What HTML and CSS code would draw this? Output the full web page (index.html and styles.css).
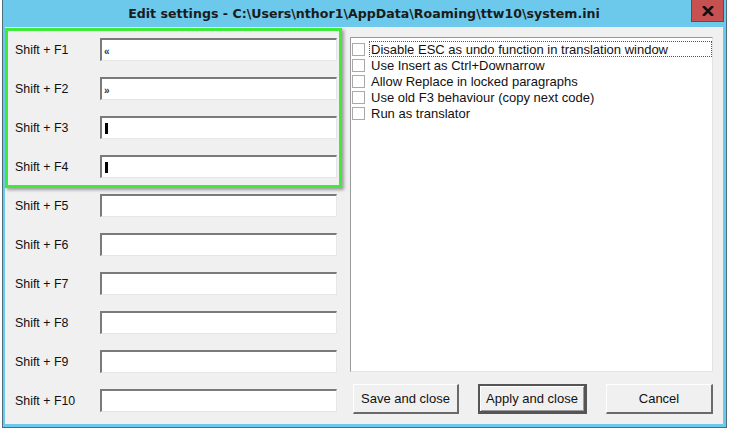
FILE: index.html
```html
<!DOCTYPE html>
<html>
<head>
<meta charset="utf-8">
<link rel="stylesheet" href="styles.css">
</head>
<body>
<div class="window">
  <div class="titlebar">
    <span></span>
    <span class="title">Edit settings - C:\Users\nthor1\AppData\Roaming\ttw10\system.ini</span>
    <span class="close"><svg width="12" height="10" viewBox="0 0 12 10"><path d="M2 1 L10 9 M10 1 L2 9" stroke="#111" stroke-width="2.6" stroke-linecap="square"/></svg></span>
  </div>
  <div class="client">
    <div class="left">
      <div class="group">
        <div class="row"><span class="label">Shift + F1</span><span class="field"><span class="small">«</span></span></div>
        <div class="row"><span class="label">Shift + F2</span><span class="field"><span class="small">»</span></span></div>
        <div class="row"><span class="label">Shift + F3</span><span class="field"><span class="bar"></span></span></div>
        <div class="row"><span class="label">Shift + F4</span><span class="field"><span class="bar"></span></span></div>
      </div>
      <div class="row"><span class="label">Shift + F5</span><span class="field"></span></div>
      <div class="row"><span class="label">Shift + F6</span><span class="field"></span></div>
      <div class="row"><span class="label">Shift + F7</span><span class="field"></span></div>
      <div class="row"><span class="label">Shift + F8</span><span class="field"></span></div>
      <div class="row"><span class="label">Shift + F9</span><span class="field"></span></div>
      <div class="row"><span class="label">Shift + F10</span><span class="field"></span></div>
    </div>
    <div class="right">
      <div class="list">
        <div class="item focus"><span class="check"></span><span class="text">Disable ESC as undo function in translation window</span></div>
        <div class="item"><span class="check"></span><span class="text">Use Insert as Ctrl+Downarrow</span></div>
        <div class="item"><span class="check"></span><span class="text">Allow Replace in locked paragraphs</span></div>
        <div class="item"><span class="check"></span><span class="text">Use old F3 behaviour (copy next code)</span></div>
        <div class="item"><span class="check"></span><span class="text">Run as translator</span></div>
      </div>
      <div class="buttons">
        <button class="btn save">Save and close</button>
        <button class="btn apply">Apply and close</button>
        <button class="btn cancel">Cancel</button>
      </div>
    </div>
  </div>
</div>
</body>
</html>
```
FILE: styles.css
```css
* { box-sizing: border-box; }
html, body { margin: 0; padding: 0; }
body {
  background: #ffffff;
  width: 731px;
  height: 432px;
  overflow: hidden;
  font-family: "Liberation Sans", Arial, sans-serif;
  font-size: 13px;
  color: #000;
}
.window {
  margin-left: 2px;
  width: 725px;
  height: 428px;
  border: 1px solid #4d6d7a;
  border-top: none;
  background: #6cc9ec;
  padding: 0 3px 3px 2px;
  display: flex;
  flex-direction: column;
}
.titlebar {
  height: 27px;
  display: grid;
  grid-template-columns: 1fr auto 1fr;
  align-items: start;
}
.title {
  font-family: "DejaVu Sans", sans-serif;
  font-weight: bold;
  font-size: 12.6px;
  color: #1b1b1b;
  line-height: 28px;
  white-space: nowrap;
}
.close {
  justify-self: end;
  width: 33px;
  height: 22px;
  margin-right: -1px;
  background: #c75050;
  border: 1px solid #8b3a3a;
  border-top: none;
  display: flex;
  align-items: center;
  justify-content: center;
}
.client {
  flex: 1;
  background: #f0f0f0;
  display: flex;
}
.left {
  width: 344px;
  padding: 11px 0 0 10px;
  display: flex;
  flex-direction: column;
  gap: 16px;
}
.group {
  position: relative;
  display: flex;
  flex-direction: column;
  gap: 16px;
}
.group::after {
  content: "";
  position: absolute;
  top: -10px;
  bottom: -10px;
  left: -10px;
  right: 7px;
  border: 3px solid #3fea3a;
  box-shadow: 2px 2px 3px rgba(0,0,0,0.35);
  pointer-events: none;
}
.row {
  display: flex;
  align-items: center;
  height: 23px;
}
.label {
  width: 85px;
  font-size: 12.4px;
  color: #111;
  padding-top: 1px;
}
.field {
  width: 237px;
  height: 23px;
  background: #fff;
  border-style: solid;
  border-width: 2px 1px 1px 2px;
  border-color: #7a7a7a #e6e6e6 #e6e6e6 #7a7a7a;
  display: flex;
  align-items: center;
  padding-left: 2px;
}
.small {
  font-size: 10px;
  font-weight: bold;
  color: #333;
  margin-top: 2px;
}
.bar {
  width: 3px;
  height: 11px;
  background: #000;
  margin-left: 1px;
  margin-top: 1px;
}
.right {
  flex: 1;
  padding: 10px 10px 0 1px;
  display: flex;
  flex-direction: column;
}
.list {
  height: 335px;
  background: #fff;
  border-top: 1px solid #9a9a9a;
  border-left: 1px solid #9a9a9a;
  border-right: 1px solid #e3e3e3;
  border-bottom: 1px solid #e3e3e3;
  padding: 3px 0 0 1px;
}
.item {
  display: flex;
  align-items: center;
  height: 16px;
}
.check {
  width: 13px;
  height: 13px;
  border: 1px solid #a9a9a9;
  background: #fff;
  flex: none;
  margin-right: 4px;
}
.text {
  flex: 1;
  height: 16px;
  line-height: 15px;
  padding-left: 1px;
  font-size: 13px;
  color: #111;
  white-space: nowrap;
  border: 1px dotted transparent;
}
.focus .text {
  border: 1px dotted #555;
}
.buttons {
  display: flex;
  margin-top: 12px;
  padding-left: 3px;
  gap: 19px;
}
.btn {
  height: 30px;
  background: #f0f0f0;
  font-family: "Liberation Sans", Arial, sans-serif;
  font-size: 13px;
  color: #111;
  border-style: solid;
  border-width: 1px 2px 2px 1px;
  border-color: #fff #6a6a6a #6a6a6a #fff;
  padding: 0;
}
.save { width: 106px; }
.apply {
  width: 109px;
  border-width: 2px 3px 3px 2px;
  border-color: #555 #555 #555 #555;
  box-shadow: inset 1px 1px 0 #fff, inset -1px -1px 0 #9a9a9a;
}
.cancel { width: 107px; }
```
